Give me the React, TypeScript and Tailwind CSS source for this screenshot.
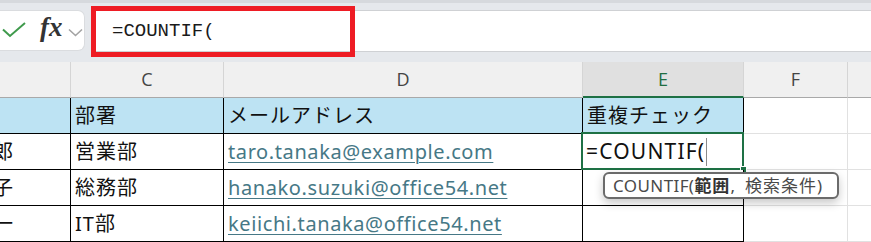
import React from 'react';

const CELL_FONT = { fontFamily: '"Noto Sans", "Noto Sans CJK JP", sans-serif' };

type Cell = {
  text?: string;
  kind?: 'jp' | 'link' | 'name';
};

const ROWS: Cell[][] = [
  [{}, { text: '部署', kind: 'jp' }, { text: 'メールアドレス', kind: 'jp' }, { text: '重複チェック', kind: 'jp' }],
  [{ text: '郎', kind: 'name' }, { text: '営業部', kind: 'jp' }, { text: 'taro.tanaka@example.com', kind: 'link' }, {}],
  [{ text: '子', kind: 'name' }, { text: '総務部', kind: 'jp' }, { text: 'hanako.suzuki@office54.net', kind: 'link' }, {}],
  [{ text: '一', kind: 'name' }, { text: 'IT部', kind: 'jp' }, { text: 'keiichi.tanaka@office54.net', kind: 'link' }, {}],
];

const WIDTHS = ['w-[71px]', 'w-[153px]', 'w-[359px]', 'w-[161px]'];

function CellText({ cell }: { cell: Cell }) {
  if (!cell.text) return null;
  if (cell.kind === 'link') {
    return (
      <span className="text-[20px] tracking-[0.6px] text-[#467886] underline underline-offset-[3px] decoration-1 pl-[4px]">
        {cell.text}
      </span>
    );
  }
  if (cell.kind === 'name') {
    return <span className="text-[20px] text-[#111] -ml-[7px]">{cell.text}</span>;
  }
  return <span className="text-[20px] tracking-[1px] text-[#111] pl-[4px]">{cell.text}</span>;
}

function FormulaBar() {
  return (
    <div className="h-[62px] bg-[#e5e8ec] border-t-[3px] border-[#d6d9dd] flex items-start pt-[7px]">
      <div className="w-[85px] h-[41px] bg-white rounded-r-[7px] border border-l-0 border-[#dadcdf] relative">
        <svg className="absolute left-[2px] top-[11px]" width="25" height="16" viewBox="0 0 25 16">
          <path d="M1 7.5 L8 14 L23 1" fill="none" stroke="#3f9a4c" strokeWidth="2" />
        </svg>
        <span
          className="absolute left-[40px] top-[3px] text-[27px] italic font-semibold text-[#333] leading-none"
          style={{ fontFamily: '"Liberation Serif", serif' }}
        >
          fx
        </span>
        <svg className="absolute left-[68px] top-[17px]" width="15" height="9" viewBox="0 0 15 9">
          <path d="M1 1.5 L7.5 7.5 L14 1.5" fill="none" stroke="#a3a3a3" strokeWidth="1.6" />
        </svg>
      </div>
      <div className="ml-[6px] flex-1 h-[42px] bg-white border-y border-[#cfd1d4] flex items-center pl-[21px]">
        <span className="text-[19px] text-[#1a1a1a]" style={{ fontFamily: '"Liberation Mono", monospace' }}>
          =COUNTIF(
        </span>
      </div>
    </div>
  );
}

function HeaderRow() {
  const letters = ['', 'C', 'D', 'E'];
  return (
    <div className="flex h-[36px]" style={{ fontFamily: '"Open Sans", sans-serif' }}>
      {letters.map((l, i) => (
        <div
          key={i}
          className={`${WIDTHS[i]} shrink-0 flex items-center justify-center text-[18px] border-r border-[#d5d5d5] ${
            l === 'E'
              ? 'bg-[#e0e0e0] text-[#1e6d41] border-b-2 border-b-[#1e7145]'
              : 'bg-[#f0f0f0] text-[#444] border-b border-b-[#a9a9a9]'
          }`}
        >
          {l}
        </div>
      ))}
      <div className="w-[104px] shrink-0 flex items-center justify-center text-[18px] text-[#444] bg-[#f0f0f0] border-r border-[#d5d5d5] border-b border-b-[#a9a9a9]">
        F
      </div>
      <div className="flex-1 bg-[#f0f0f0] border-b border-b-[#a9a9a9]" />
    </div>
  );
}

function ActiveCell() {
  return (
    <>
      <span className="text-[21px] tracking-[1.2px] text-[#111] pl-[3px]">=COUNTIF(</span>
      <span className="absolute left-[123px] top-[4px] w-px h-[28px] bg-[#8a8a8a]" />
      <div className="absolute -left-[2px] -top-[2px] w-[163px] h-[38px] border-2 border-[#1e7145]" />
      <div className="absolute left-[157px] top-[32px] w-[7px] h-[7px] bg-[#1e7145] border border-white" />
    </>
  );
}

export default function App() {
  return (
    <div className="w-[871px] h-[242px] overflow-hidden bg-white relative">
      <FormulaBar />
      <HeaderRow />
      <div style={CELL_FONT}>
        {ROWS.map((row, r) => (
          <div key={r} className="flex h-[36px]">
            {row.map((cell, c) => (
              <div
                key={c}
                className={`${WIDTHS[c]} shrink-0 relative flex items-center whitespace-nowrap border-r border-b border-black ${
                  r === 0 ? 'bg-[#bde3f3]' : 'bg-white'
                } ${c === 0 ? 'overflow-hidden' : ''}`}
              >
                {r === 1 && c === 3 ? <ActiveCell /> : <CellText cell={cell} />}
              </div>
            ))}
            <div className="w-[104px] shrink-0 border-r border-b border-[#e1e1e1]" />
            <div className="flex-1 border-b border-[#e1e1e1]" />
          </div>
        ))}
      </div>
      <div
        className="absolute left-[91px] top-[6px] w-[264px] h-[51px] border-[5px] border-[#ee1c24]"
      />
      <div
        className="absolute left-[603px] top-[172px] w-[236px] h-[27px] bg-white border-2 border-[#6b6b6b] rounded-[6px] shadow-[0_4px_10px_rgba(0,0,0,0.22)] flex items-center pl-[8px] text-[17px] tracking-[0.4px] text-[#4a4a4a] whitespace-nowrap"
        style={CELL_FONT}
      >
        COUNTIF(<b className="font-bold text-[#333] tracking-[1px]">範囲</b>,&nbsp;&nbsp;<span className="tracking-[1px]">検索条件</span>)
      </div>
    </div>
  );
}
